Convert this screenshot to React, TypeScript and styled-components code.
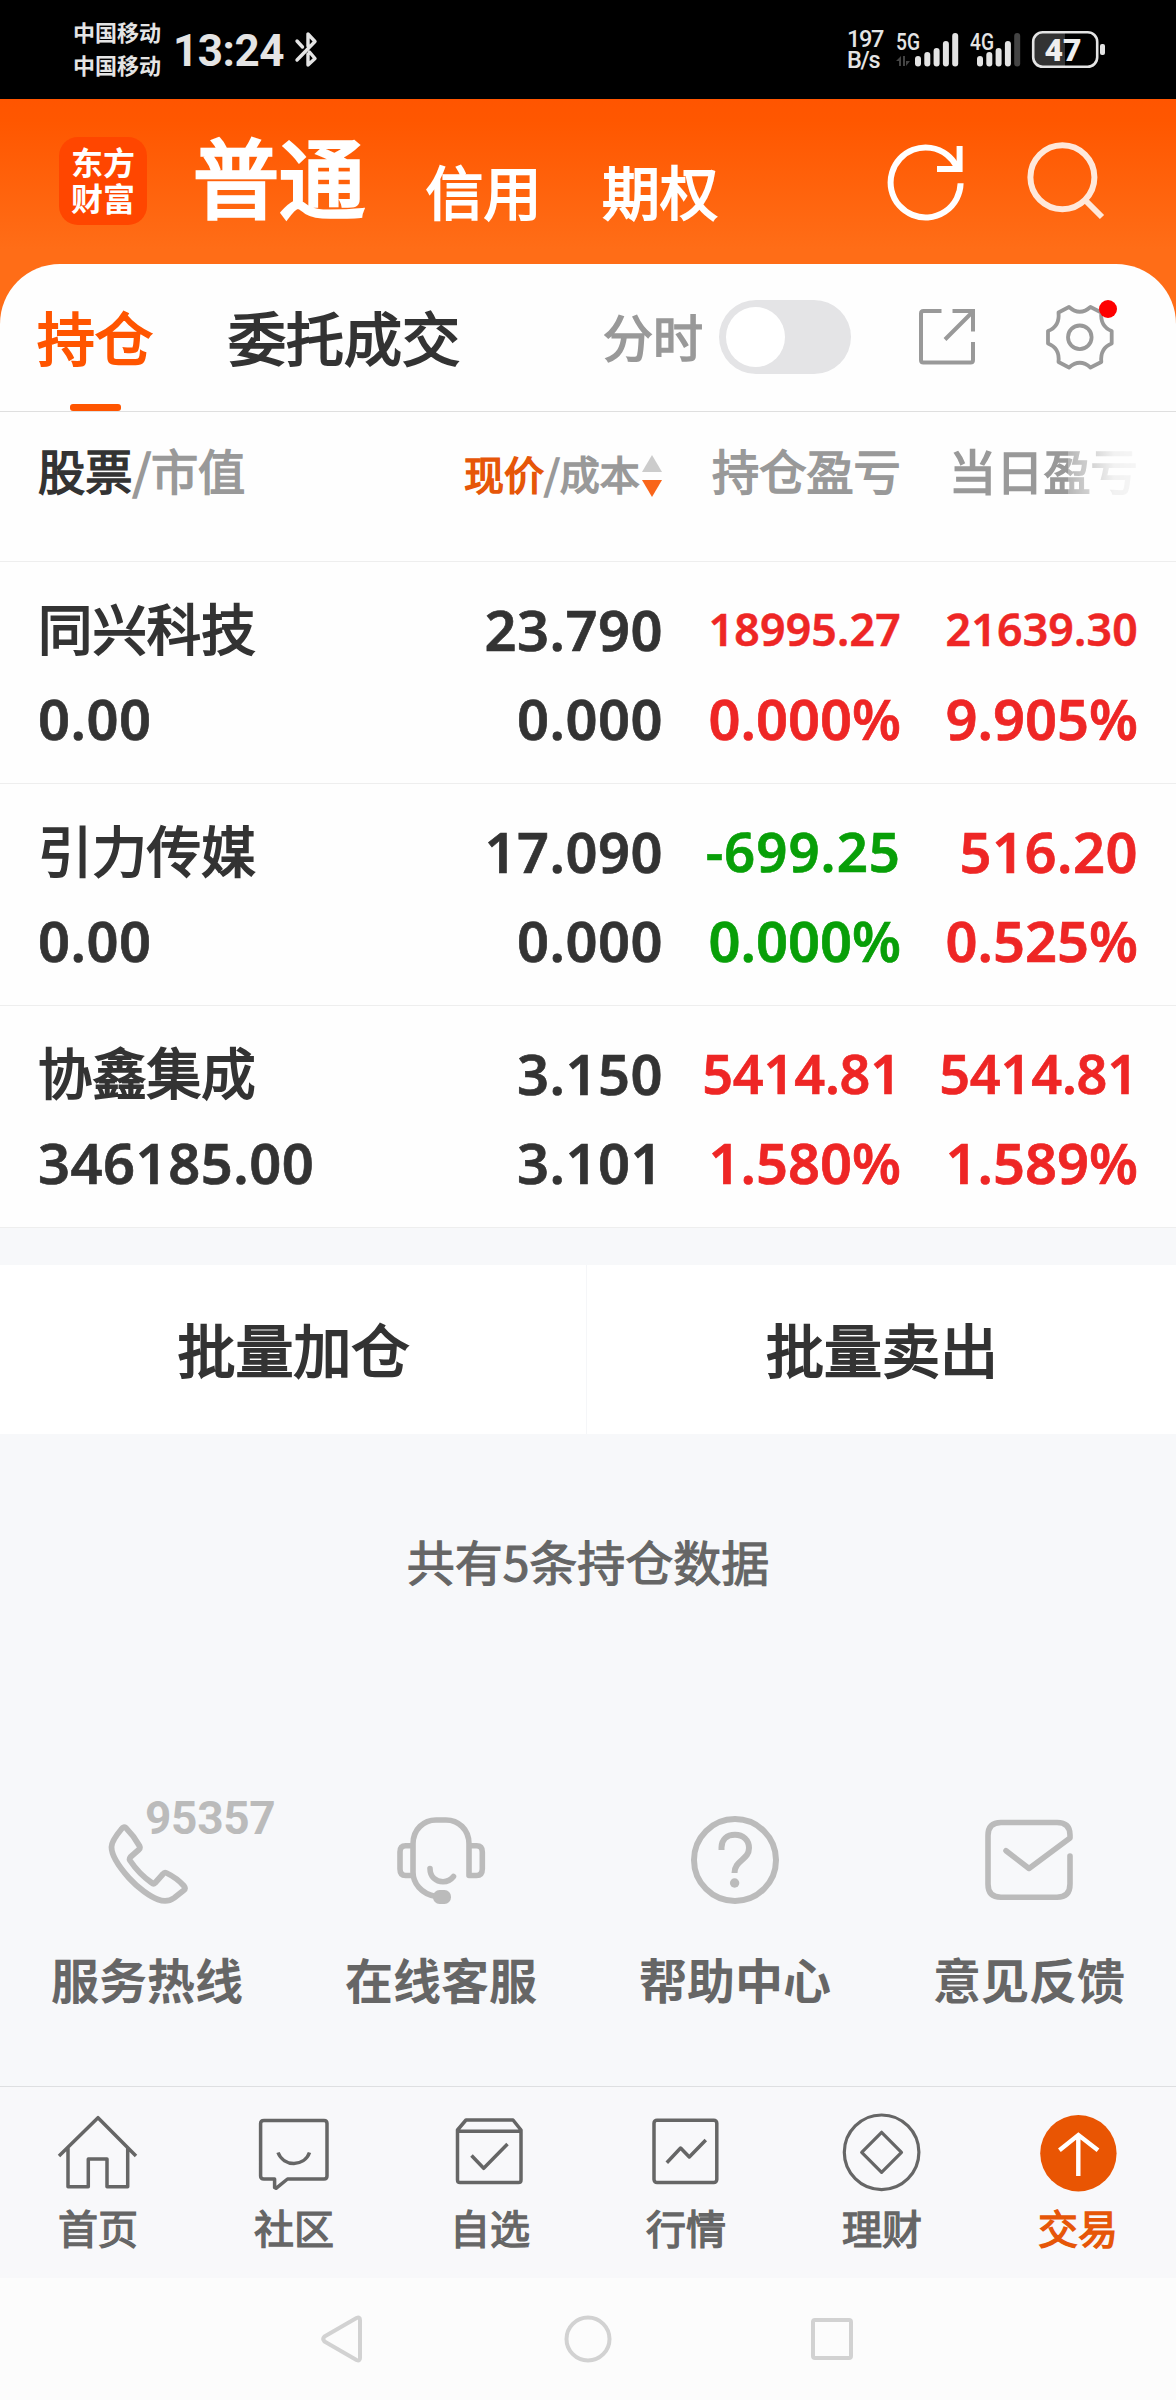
import React from "react";
import styled, { createGlobalStyle, css } from "styled-components";

const CJK = `"Noto Sans CJK SC", sans-serif`;
const NUM = `"Noto Sans", "Noto Sans CJK SC", sans-serif`;
const STATUS = `Roboto, "Noto Sans CJK SC", sans-serif`;

const GlobalStyle = createGlobalStyle`
  *, *::before, *::after { box-sizing: border-box; }
  body { margin: 0; background: #f7f8fa; }
  svg { display: block; flex: none; }
`;

/* A weight between the family's regular and bold cuts. */
const semi = css`
  font-weight: 400;
  -webkit-text-stroke: 0.034em currentColor;
`;

const Screen = styled.div`
  width: 1176px;
  height: 2400px;
  display: flex;
  flex-direction: column;
  font-family: ${CJK};
  color: #333;
  background: #f7f8fa;
  overflow: hidden;
  white-space: nowrap;
`;

/* ---------- status bar ---------- */

const StatusBar = styled.div`
  height: 99px;
  flex: none;
  background: #000;
  color: #e4e4e4;
  display: flex;
  justify-content: space-between;
  padding: 0 70px 0 73px;
`;

const StatusSide = styled.div`
  display: flex;
  align-items: flex-start;
`;

const Carriers = styled.div`
  width: 100px;
  padding-top: 15px;
  font-size: 22px;
  line-height: 33px;
  font-weight: 700;
`;

const Clock = styled.div`
  width: 121px;
  padding-top: 25px;
  font: 700 44px/52px ${STATUS};
  letter-spacing: -0.5px;
`;

const BluetoothWrap = styled.div`
  padding-top: 30px;
`;

const NetSpeed = styled.div`
  width: 49px;
  padding-top: 29px;
  font: 500 23.5px/21px ${STATUS};
  letter-spacing: -1.3px;
`;

/* ---------- brand header ---------- */

const Header = styled.header`
  height: 225px;
  margin-bottom: -60px;
  flex: none;
  background: linear-gradient(180deg, #ff5500 0, #ff5700 22px, #ff6d17 150px, #ff6d17 100%);
  display: flex;
  align-items: flex-start;
  padding-left: 59px;
  color: #fff;
`;

const Logo = styled.div`
  width: 88px;
  height: 88px;
  margin-top: 38px;
  padding-top: 7px;
  border-radius: 19px;
  background: #ff4600;
  text-align: center;
  font-size: 32px;
  line-height: 35.5px;
  font-weight: 700;
`;

const AccountTabs = styled.div`
  display: flex;
  margin-left: 46px;
  width: 694px;
`;

const AccountTab = styled.div<{ $active?: boolean }>`
  ${semi}
  font-size: 58px;
  line-height: 90px;
  padding-top: 46px;
  margin-right: 60.5px;
  ${(p) =>
    p.$active &&
    css`
      font-size: 86px;
      line-height: 100px;
      padding-top: 26px;
      -webkit-text-stroke-width: 0.042em;
    `}
`;

const HeaderIcons = styled.div`
  display: flex;
  gap: 58px;
  padding-top: 41px;
`;

/* ---------- panel ---------- */

const Panel = styled.main`
  flex: none;
  background: #fefefe;
  border-radius: 60px 60px 0 0;
`;

const TabBar = styled.div`
  height: 148px;
  border-bottom: 1px solid #dfdfdf;
  display: flex;
  align-items: flex-start;
  padding-left: 37px;
`;

const Tab = styled.div<{ $active?: boolean }>`
  ${semi}
  height: 147px;
  margin-right: 75px;
  padding-top: 29px;
  font-size: 58px;
  line-height: 86px;
  color: ${(p) => (p.$active ? "#ff5500" : "#333")};
  display: flex;
  flex-direction: column;
  justify-content: space-between;
  align-items: center;
`;

const TabMark = styled.i`
  width: 51px;
  height: 7px;
  border-radius: 3px;
  background: #ff5500;
`;

const TabTools = styled.div`
  display: flex;
  margin-left: 68px;
`;

const ToolLabel = styled.div`
  ${semi}
  width: 116px;
  padding-top: 36px;
  font-size: 50px;
  line-height: 70px;
  color: #999;
`;

const Switch = styled.div`
  width: 132px;
  height: 74px;
  margin-top: 36px;
  padding: 7px;
  border-radius: 37px;
  background: #e4e4e6;
`;

const Knob = styled.div`
  width: 59px;
  height: 60px;
  border-radius: 50%;
  background: #fff;
`;

const ToolIcon = styled.div<{ $left: number }>`
  position: relative;
  margin-left: ${(p) => p.$left}px;
  margin-top: 38px;
`;

const Dot = styled.i`
  position: absolute;
  right: -3px;
  top: -2px;
  width: 18px;
  height: 18px;
  border-radius: 50%;
  background: #fe0000;
`;

/* ---------- holdings table ---------- */

const tableGrid = css`
  display: grid;
  grid-template-columns: 362px 263px 238px 237px;
  padding-left: 38px;
`;

const TableHead = styled.div`
  ${tableGrid}
  ${semi}
  height: 150px;
  border-bottom: 1px solid #eee;
  color: #999;
  font-size: 47.2px;
  line-height: 70px;
  padding-top: 23px;
`;

const HeadCell = styled.div<{ $shift?: number }>`
  margin-left: ${(p) => p.$shift || 0}px;
`;

const Strong = styled.span`
  color: #333;
`;

const PriceHead = styled.div`
  display: flex;
  margin-left: 64px;
  font-size: 40px;
  line-height: 76px;
`;

const Accent = styled.span`
  color: #e65608;
`;

const SortWrap = styled.span`
  padding: 20px 0 0 2px;
`;

const FadedHead = styled.div`
  margin-left: 48px;
  width: 190px;
  mask-image: linear-gradient(90deg, #000 119px, rgba(0, 0, 0, 0.72) 119px, rgba(0, 0, 0, 0.12) 165px, rgba(0, 0, 0, 0.08) 190px);
`;

const Row = styled.div`
  ${tableGrid}
  height: 222px;
  padding-top: 23px;
  grid-auto-rows: 89px;
  border-bottom: 1px solid #eee;
`;

const Name = styled.div`
  ${semi}
  font-size: 54.4px;
  line-height: 83px;
`;

const tones = { ink: "#333", up: "#ee2625", down: "#089f08" };
type Tone = keyof typeof tones;

const Value = styled.div<{ $tone?: Tone; $size?: number; $track?: number; $left?: boolean }>`
  font: 600 ${(p) => p.$size || 56}px / 88px ${NUM};
  -webkit-text-stroke: 0.012em currentColor;
  letter-spacing: ${(p) => p.$track ?? 0.5}px;
  text-align: ${(p) => (p.$left ? "left" : "right")};
  color: ${(p) => tones[p.$tone || "ink"]};
`;

/* ---------- batch actions ---------- */

const Actions = styled.div`
  flex: none;
  height: 169px;
  margin-top: 37px;
  display: grid;
  grid-template-columns: 586px 1fr;
  background: #fff;
`;

const Action = styled.div`
  ${semi}
  padding: 40px 0 0 1px;
  text-align: center;
  font-size: 58px;
  line-height: 86px;
  & + & {
    border-left: 1px solid #f5f6f8;
  }
`;

const Summary = styled.div`
  ${semi}
  -webkit-text-stroke-width: 0.024em;
  flex: none;
  height: 382px;
  padding-top: 91px;
  text-align: center;
  font-size: 48px;
  line-height: 70px;
  color: #666;
`;

/* ---------- services ---------- */

const Services = styled.div`
  flex: none;
  height: 270px;
  display: grid;
  grid-template-columns: repeat(4, 1fr);
`;

const Service = styled.div`
  position: relative;
  display: flex;
  flex-direction: column;
  align-items: center;
  gap: 37px;
  font-size: 48px;
  line-height: 70px;
  font-weight: 700;
  color: #666;
`;

const Hotline = styled.span`
  position: absolute;
  left: 145px;
  top: -23px;
  font: 700 46px/50px ${STATUS};
  letter-spacing: -0.3px;
  color: #bbb;
`;

/* ---------- bottom bars ---------- */

const BottomNav = styled.nav`
  flex: none;
  height: 192px;
  border-top: 1px solid #dedfe1;
  background: #f8f8fa;
  display: grid;
  grid-template-columns: repeat(6, 1fr);
`;

const NavItem = styled.div<{ $active?: boolean }>`
  ${semi}
  display: flex;
  flex-direction: column;
  align-items: center;
  padding-top: 25px;
  gap: 3px;
  font-size: 40px;
  line-height: 60px;
  color: ${(p) => (p.$active ? "#e65608" : "#666")};
`;

const SystemBar = styled.div`
  flex: 1;
  background: #fcfcfc;
  display: flex;
  justify-content: center;
  gap: 196px;
  padding-top: 35px;
`;

/* ---------- drawings ---------- */

type IconProps = {
  box: [number, number, number, number];
  stroke?: string;
  width?: number;
  children: React.ReactNode;
};

const Icon = ({ box, stroke = "currentColor", width = 3.5, children }: IconProps) => (
  <svg
    width={box[2]}
    height={box[3]}
    viewBox={box.join(" ")}
    fill="none"
    stroke={stroke}
    strokeWidth={width}
    strokeLinejoin="round"
  >
    {children}
  </svg>
);

const signalTops = [56, 52, 48, 41, 33];

type SignalProps = { x: number; size: number; bars: number; label: string; lit: number; busy?: boolean };

const Signal = ({ x, size, bars, label, lit, busy }: SignalProps) => (
  <svg width={size} height={99} viewBox={`${x} 0 ${size} 99`}>
    <text x={x} y={50} fill="#e4e4e4" fontFamily="Roboto" fontWeight={500} fontSize={23} textLength={24} lengthAdjust="spacingAndGlyphs">
      {label}
    </text>
    {busy && <path d="M896 61l5-5v10h-2v-5zM903 56h2v10h-2zM906 56v5h4l-4 5z" fill="#444" />}
    {signalTops.map((top, i) => (
      <rect key={top} x={bars + i * 9.3} y={top} width={6} height={66.5 - top} rx={3} fill={i < lit ? "#e4e4e4" : "#444"} />
    ))}
  </svg>
);

const Battery = () => (
  <svg width={75} height={99} viewBox="1031 0 75 99">
    <path d="M1065 33H1043Q1034 33 1034 42V57Q1034 66 1043 66H1065Z" fill="#333" />
    <rect x={1033.2} y={32.2} width={64} height={34.6} rx={9.5} fill="none" stroke="#e4e4e4" strokeWidth={2.6} />
    <rect x={1100} y={44} width={5} height={11} rx={2} fill="#e4e4e4" />
    <text x={1044.5} y={61.3} fill="#eee" fontFamily="Roboto" fontWeight={900} fontSize={31.5} textLength={37} lengthAdjust="spacingAndGlyphs">
      47
    </text>
  </svg>
);

type Cell = { text: string; tone: Tone; size?: number; track?: number };

const holdings: { name: string; worth: string; price: string; cost: string; profit: [Cell, Cell]; rate: [Cell, Cell] }[] = [
  {
    name: "同兴科技",
    worth: "0.00",
    price: "23.790",
    cost: "0.000",
    profit: [
      { text: "18995.27", tone: "up", size: 44.6, track: 0.2 },
      { text: "21639.30", tone: "up", size: 44.6, track: 0.2 },
    ],
    rate: [
      { text: "0.000%", tone: "up", track: 0 },
      { text: "9.905%", tone: "up", track: 0 },
    ],
  },
  {
    name: "引力传媒",
    worth: "0.00",
    price: "17.090",
    cost: "0.000",
    profit: [
      { text: "-699.25", tone: "down", size: 54.5, track: 1 },
      { text: "516.20", tone: "up" },
    ],
    rate: [
      { text: "0.000%", tone: "down", track: 0 },
      { text: "0.525%", tone: "up", track: 0 },
    ],
  },
  {
    name: "协鑫集成",
    worth: "346185.00",
    price: "3.150",
    cost: "3.101",
    profit: [
      { text: "5414.81", tone: "up", size: 54, track: -0.2 },
      { text: "5414.81", tone: "up", size: 54, track: -0.2 },
    ],
    rate: [
      { text: "1.580%", tone: "up", track: 0 },
      { text: "1.589%", tone: "up", track: 0 },
    ],
  },
];

const services = [
  {
    label: "服务热线",
    icon: (
      <Icon box={[103, 1816, 88, 90]} stroke="#bbb" width={5.8}>
        <path d="M121.5 1829Q111.5 1841 111.5 1847C111.5 1856 121 1869 129 1878C138 1888 150 1896.5 158 1899.5Q167 1903 174 1898L183.5 1890.5Q186 1888.5 184 1886Q177 1878 166.5 1873Q164.5 1872 163 1874L155 1883Q153.5 1884.5 152 1883C144 1877.5 136 1869.5 130 1860.5Q129 1859 130.5 1857L139 1849.5Q140.5 1848 139.5 1846Q134 1836 126 1828Q123.5 1826 121.5 1829Z" />
      </Icon>
    ),
  },
  {
    label: "在线客服",
    icon: (
      <Icon box={[396, 1816, 90, 90]} stroke="#bbb" width={5.6}>
        <path d="M436 1896.5C421 1894 413 1883 413 1872V1844C413 1829 424 1820 436 1820H446C458 1820 469 1829 469 1844V1875.5H476.5Q482.3 1875.5 482.3 1869V1852Q482.3 1845.8 476.5 1845.8H469M413 1845.8H405.7Q400 1845.8 400 1852V1869Q400 1875.5 405.7 1875.5H413" />
        <path d="M430 1868.5C430 1877 436 1881.7 443 1881.7Q449.5 1881.7 453.5 1876.5" strokeLinecap="round" />
        <rect x={433} y={1890} width={18} height={14} rx={6.5} fill="#bbb" stroke="none" />
      </Icon>
    ),
  },
  {
    label: "帮助中心",
    icon: (
      <Icon box={[690, 1816, 90, 90]} stroke="#bbb" width={6}>
        <circle cx={735} cy={1860} r={41} />
        <path d="M721.5 1850V1847.5C721.5 1839.5 727 1834.7 735 1834.7C743 1834.7 749 1840 749 1848C749 1860 734.5 1860 734.5 1873" />
        <circle cx={734.6} cy={1883} r={4.7} fill="#bbb" stroke="none" />
      </Icon>
    ),
  },
  {
    label: "意见反馈",
    icon: (
      <Icon box={[984, 1816, 90, 90]} stroke="#bbb" width={5.6}>
        <path d="M1070 1856V1884Q1070 1897.3 1057 1897.3H1001Q988 1897.3 988 1884V1835.5Q988 1822.5 1001 1822.5H1057Q1070 1822.5 1070 1835V1838L1029 1868.5L1006 1850.7" strokeLinecap="round" />
      </Icon>
    ),
  },
];

const navItems = [
  {
    label: "首页",
    icon: (
      <Icon box={[56, 2112, 84, 82]}>
        <path d="M59 2156L98 2117.7L136 2156M68 2147.5V2186.7H88.3V2159H107V2186.7H127.7V2147.5" />
      </Icon>
    ),
  },
  {
    label: "社区",
    icon: (
      <Icon box={[252, 2112, 84, 82]}>
        <path d="M264 2120.5H324Q327 2120.5 327 2123.5V2176Q327 2179 324 2179H287.5L276 2188.3L274.6 2187.5V2179H264Q260.6 2179 260.6 2176V2123.5Q260.6 2120.5 264 2120.5ZM278 2152.5C283.5 2167 304.5 2167 309.5 2152.5" />
      </Icon>
    ),
  },
  {
    label: "自选",
    icon: (
      <Icon box={[448, 2112, 84, 82]}>
        <path d="M457.5 2131.3H521V2180Q521 2182.6 518.5 2182.6H460Q457.5 2182.6 457.5 2180V2130L466 2120H513L521 2130V2131.3M471.5 2155.5L483.7 2168.3L507.5 2144" />
      </Icon>
    ),
  },
  {
    label: "行情",
    icon: (
      <Icon box={[644, 2112, 84, 82]}>
        <rect x={654} y={2120.2} width={62.8} height={62.4} rx={3} />
        <path d="M666.8 2162.7L680.6 2148L689.3 2157L705.8 2140" />
      </Icon>
    ),
  },
  {
    label: "理财",
    icon: (
      <Icon box={[840, 2112, 84, 82]} width={3.2}>
        <circle cx={881.6} cy={2152.3} r={37.3} />
        <path d="M861.7 2152.3L881.6 2132.3L901.5 2152.3L881.6 2172.3Z" />
      </Icon>
    ),
  },
  {
    label: "交易",
    active: true,
    icon: (
      <Icon box={[1036, 2112, 84, 82]} stroke="#fff" width={4.4}>
        <circle cx={1078.4} cy={2153.3} r={38.2} fill="#e95503" stroke="none" />
        <path d="M1078.3 2176V2135M1059.4 2150.3L1078.4 2135L1098 2150.3" strokeLinejoin="miter" />
      </Icon>
    ),
  },
];

const CellValue = ({ cell }: { cell: Cell }) => (
  <Value $tone={cell.tone} $size={cell.size} $track={cell.track}>
    {cell.text}
  </Value>
);

export default function App() {
  return (
    <Screen>
      <GlobalStyle />
      <StatusBar>
        <StatusSide>
          <Carriers>
            <div>中国移动</div>
            <div>中国移动</div>
          </Carriers>
          <Clock>13:24</Clock>
          <BluetoothWrap>
            <Icon box={[294, 30, 28, 40]} stroke="#e4e4e4" width={3.4}>
              <path d="M297 60L315 41.5L308 34V46M297 41L302.5 47M308 54V65L315 58.5L309.5 52" strokeLinecap="round" />
            </Icon>
          </BluetoothWrap>
        </StatusSide>
        <StatusSide>
          <NetSpeed>
            <div>197</div>
            <div>B/s</div>
          </NetSpeed>
          <Signal x={896} size={74} bars={915} label="5G" lit={5} busy />
          <Signal x={970} size={61} bars={977} label="4G" lit={4} />
          <Battery />
        </StatusSide>
      </StatusBar>

      <Header>
        <Logo>
          <div>东方</div>
          <div>财富</div>
        </Logo>
        <AccountTabs>
          <AccountTab $active>普通</AccountTab>
          <AccountTab>信用</AccountTab>
          <AccountTab>期权</AccountTab>
        </AccountTabs>
        <HeaderIcons>
          <Icon box={[887, 140, 80, 84]} stroke="#fff" width={6}>
            <path d="M960.6 183.3A35 35 0 1 1 957 167" strokeLinejoin="miter" />
            <path d="M959.6 146V169H937" strokeLinejoin="miter" />
          </Icon>
          <Icon box={[1025, 140, 82, 84]} stroke="#ffe8da" width={6}>
            <circle cx={1062.4} cy={177.2} r={32} />
            <path d="M1085 200L1102 217" />
          </Icon>
        </HeaderIcons>
      </Header>

      <Panel>
        <TabBar>
          <Tab $active>
            持仓
            <TabMark />
          </Tab>
          <Tab>委托成交</Tab>
          <TabTools>
            <ToolLabel>分时</ToolLabel>
            <Switch>
              <Knob />
            </Switch>
            <ToolIcon $left={66}>
              <Icon box={[917, 302, 62, 70]} stroke="#999" width={4}>
                <path d="M941.5 311H923.5Q921 311 921 313.5V360Q921 362.6 923.5 362.6H970.5Q973 362.6 973 360V342" />
                <path d="M952.5 311H973V331.5M972.5 312L945 339.5" strokeLinejoin="miter" />
              </Icon>
            </ToolIcon>
            <ToolIcon $left={65}>
              <Icon box={[1044, 302, 70, 70]} stroke="#999" width={3.8}>
                <path d="M1069 307Q1079.8 316.5 1090.5 307L1101.3 312.5Q1100 326.5 1111.7 331V343.5Q1100 348 1101.3 362L1090.5 367.5Q1079.8 358 1069 367.5L1058.5 362Q1060 348 1048 343.5V331Q1060 326.5 1058.5 312.5Z" />
                <circle cx={1079.8} cy={337.3} r={11.8} />
              </Icon>
              <Dot />
            </ToolIcon>
          </TabTools>
        </TabBar>

        <TableHead>
          <HeadCell>
            <Strong>股票</Strong>/市值
          </HeadCell>
          <PriceHead>
            <Accent>现价</Accent>/成本
            <SortWrap>
              <svg width={20} height={44} viewBox="0 0 20 44">
                <path d="M10 0L20 17H0Z" fill="#ccc" />
                <path d="M0 25H20L10 42Z" fill="#f9651a" />
              </svg>
            </SortWrap>
          </PriceHead>
          <HeadCell $shift={49}>持仓盈亏</HeadCell>
          <FadedHead>当日盈亏</FadedHead>
        </TableHead>

        {holdings.map((h) => (
          <Row key={h.name}>
            <Name>{h.name}</Name>
            <Value>{h.price}</Value>
            <CellValue cell={h.profit[0]} />
            <CellValue cell={h.profit[1]} />
            <Value $left>{h.worth}</Value>
            <Value>{h.cost}</Value>
            <CellValue cell={h.rate[0]} />
            <CellValue cell={h.rate[1]} />
          </Row>
        ))}
      </Panel>

      <Actions>
        <Action>批量加仓</Action>
        <Action>批量卖出</Action>
      </Actions>

      <Summary>共有5条持仓数据</Summary>

      <Services>
        {services.map((s, i) => (
          <Service key={s.label}>
            {s.icon}
            {i === 0 && <Hotline>95357</Hotline>}
            {s.label}
          </Service>
        ))}
      </Services>

      <BottomNav>
        {navItems.map((n) => (
          <NavItem key={n.label} $active={n.active}>
            {n.icon}
            {n.label}
          </NavItem>
        ))}
      </BottomNav>

      <SystemBar>
        <Icon box={[318, 2313, 48, 52]} stroke="#d2d2d2" width={4}>
          <path d="M324.5 2336.5L356.5 2318Q360 2316.5 360 2320V2358Q360 2361.5 356.5 2360L324.5 2341.5Q322 2339 324.5 2336.5Z" />
        </Icon>
        <Icon box={[562, 2313, 52, 52]} stroke="#d2d2d2" width={4}>
          <circle cx={588} cy={2339} r={21.5} />
        </Icon>
        <Icon box={[810, 2313, 48, 52]} stroke="#d2d2d2" width={4}>
          <rect x={813} y={2320} width={38} height={38} rx={2} />
        </Icon>
      </SystemBar>
    </Screen>
  );
}
